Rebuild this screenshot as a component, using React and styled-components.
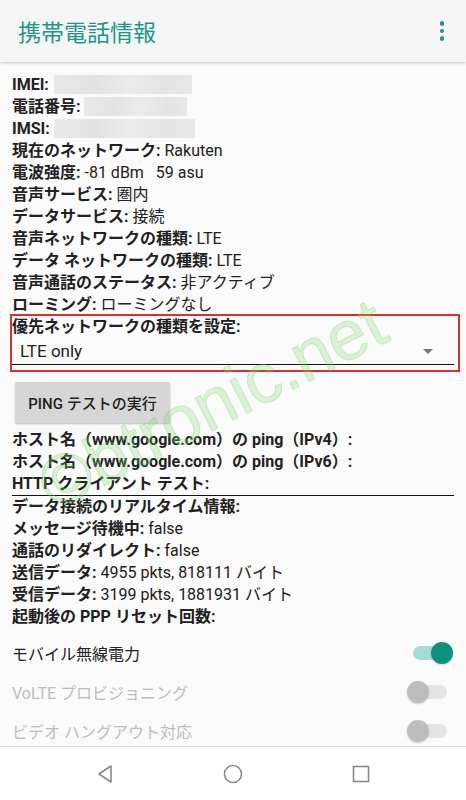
import React from "react";
import styled, { createGlobalStyle } from "styled-components";

const Global = createGlobalStyle`
  html, body { margin: 0; padding: 0; background: #fafafa; }
  * { box-sizing: border-box; }
`;

const FONT = `"Roboto", "Noto Sans CJK JP", "Noto Sans", sans-serif`;

const Screen = styled.div`
  position: relative;
  width: 466px;
  height: 800px;
  display: flex;
  flex-direction: column;
  background: #fafafa;
  font-family: ${FONT};
  color: #212121;
  overflow: hidden;
`;

const AppBar = styled.header`
  height: 62px;
  flex: none;
  display: flex;
  align-items: center;
  justify-content: space-between;
  padding: 0 18px 0 18px;
  background: #f5f5f5;
  box-shadow: 0 1px 3px rgba(0, 0, 0, 0.22);
  position: relative;
  z-index: 2;
`;

const Title = styled.h1`
  margin: 0;
  font-size: 23px;
  font-weight: 400;
  color: #1f9488;
  letter-spacing: 0;
`;

const Kebab = styled.div`
  display: flex;
  flex-direction: column;
  gap: 3px;
  margin-right: 4px;
  span {
    width: 4.5px;
    height: 4.5px;
    border-radius: 50%;
    background: #1f9488;
  }
`;

const Content = styled.main`
  flex: 1;
  overflow: hidden;
  padding: 12px 12px 0 12px;
`;

const Line = styled.div`
  font-size: 16px;
  line-height: 22px;
  height: 22px;
  white-space: nowrap;
  ${(p) => p.$underline && `border-bottom: 1.5px solid #111; height: 23px;`}
`;

const Label = styled.span`
  font-weight: 700;
`;

const Value = styled.span`
  font-weight: 400;
`;

const Redacted = styled.span`
  display: inline-block;
  vertical-align: middle;
  width: ${(p) => p.$w}px;
  height: 19px;
  margin-left: ${(p) => p.$ml || 1}px;
  margin-top: -3px;
  background: linear-gradient(100deg, #e9e9e9 0%, #e2e2e2 30%, #ebebeb 55%, #e3e3e3 80%, #e8e8e8 100%);
`;

const Highlight = styled.section`
  margin: -2px -6px -2px -2px;
  padding: 0 4px 0 0;
  border: 2px solid #d9322e;
`;

const SelectRow = styled.div`
  height: 27px;
  margin-bottom: 5px;
  display: flex;
  align-items: center;
  justify-content: space-between;
  padding: 0 21px 0 8px;
  border-bottom: 1.5px solid #111;
  font-size: 17px;
  color: #212121;
`;

const Caret = styled.span`
  width: 0;
  height: 0;
  border-left: 5px solid transparent;
  border-right: 5px solid transparent;
  border-top: 5px solid #757575;
`;

const PingButton = styled.button`
  display: block;
  margin: 12px 0 6px 3px;
  width: 155px;
  height: 41px;
  border: none;
  border-radius: 2px;
  background: #d6d6d6;
  box-shadow: 0 1px 2px rgba(0, 0, 0, 0.25);
  font-family: ${FONT};
  font-size: 15px;
  font-weight: 500;
  color: #222;
  padding: 0;
`;

const Toggles = styled.div`
  margin-top: 5px;
`;

const ToggleRow = styled.div`
  height: 39px;
  display: flex;
  align-items: center;
  justify-content: space-between;
  font-size: 16px;
  color: ${(p) => (p.$disabled ? "#bdbdbd" : "#212121")};
`;

const Switch = styled.span`
  position: relative;
  width: 46px;
  height: 22px;
  margin-right: 1px;
  flex: none;
`;

const Track = styled.span`
  position: absolute;
  left: 6px;
  top: 4px;
  width: 34px;
  height: 14px;
  border-radius: 7px;
  background: ${(p) => (p.$on ? "#a9dbd5" : "#e4e4e4")};
`;

const Thumb = styled.span`
  position: absolute;
  top: 0;
  ${(p) => (p.$on ? "right: 0;" : "left: 0;")}
  width: 22px;
  height: 22px;
  border-radius: 50%;
  background: ${(p) => (p.$on ? "#10907f" : "#bdbdbd")};
  box-shadow: 0 1px 2px rgba(0, 0, 0, 0.18);
`;

const NavBar = styled.nav`
  height: 54px;
  flex: none;
  background: #ffffff;
  border-top: 1px solid #dedede;
  display: grid;
  grid-template-columns: repeat(3, 128px);
  justify-content: center;
  align-items: center;
  justify-items: center;
  position: relative;
  z-index: 2;
`;

const Watermark = styled.div`
  position: absolute;
  left: 212px;
  top: 404px;
  transform: translate(-50%, -50%) rotate(-27deg);
  font-family: "Liberation Sans", "Roboto", sans-serif;
  font-size: 70px;
  color: rgba(125, 220, 105, 0.26);
  -webkit-text-stroke: 1px rgba(110, 205, 95, 0.3);
  white-space: nowrap;
  pointer-events: none;
  z-index: 1;
`;

function Toggle({ on, disabled, children }) {
  return (
    <ToggleRow $disabled={disabled}>
      <span>{children}</span>
      <Switch>
        <Track $on={on} />
        <Thumb $on={on} />
      </Switch>
    </ToggleRow>
  );
}

const info = [
  ["現在のネットワーク:", "Rakuten"],
  ["電波強度:", "-81 dBm\u00a0\u00a0\u00a059 asu"],
  ["音声サービス:", "圏内"],
  ["データサービス:", "接続"],
  ["音声ネットワークの種類:", "LTE"],
  ["データ ネットワークの種類:", "LTE"],
  ["音声通話のステータス:", "非アクティブ"],
  ["ローミング:", "ローミングなし"],
];

const stats = [
  ["メッセージ待機中:", "false"],
  ["通話のリダイレクト:", "false"],
  ["送信データ:", "4955 pkts, 818111 バイト"],
  ["受信データ:", "3199 pkts, 1881931 バイト"],
  ["起動後の PPP リセット回数:", ""],
];

export default function App() {
  return (
    <>
      <Global />
      <Screen>
        <AppBar>
          <Title>携帯電話情報</Title>
          <Kebab>
            <span />
            <span />
            <span />
          </Kebab>
        </AppBar>
        <Content>
          <Line>
            <Label>IMEI:</Label>
            <Redacted $w={138} $ml={5} />
          </Line>
          <Line>
            <Label>電話番号:</Label>
            <Redacted $w={103} $ml={3} />
          </Line>
          <Line>
            <Label>IMSI:</Label>
            <Redacted $w={141} $ml={4} />
          </Line>
          {info.map(([l, v]) => (
            <Line key={l}>
              <Label>{l}</Label> <Value>{v}</Value>
            </Line>
          ))}
          <Highlight>
            <Line>
              <Label>優先ネットワークの種類を設定:</Label>
            </Line>
            <SelectRow>
              <span>LTE only</span>
              <Caret />
            </SelectRow>
          </Highlight>
          <PingButton>PING テストの実行</PingButton>
          <Line>
            <Label>ホスト名（www.google.com）の ping（IPv4）:</Label>
          </Line>
          <Line>
            <Label>ホスト名（www.google.com）の ping（IPv6）:</Label>
          </Line>
          <Line $underline>
            <Label>HTTP クライアント テスト:</Label>
          </Line>
          <Line>
            <Label>データ接続のリアルタイム情報:</Label>
          </Line>
          {stats.map(([l, v]) => (
            <Line key={l}>
              <Label>{l}</Label> <Value>{v}</Value>
            </Line>
          ))}
          <Toggles>
            <Toggle on>モバイル無線電力</Toggle>
            <Toggle disabled>VoLTE プロビジョニング</Toggle>
            <Toggle disabled>ビデオ ハングアウト対応</Toggle>
          </Toggles>
        </Content>
        <NavBar>
          <svg width="20" height="22" viewBox="0 0 20 22">
            <path d="M16 3 L4 11 L16 19 Z" fill="none" stroke="#8a8a8a" strokeWidth="1.6" strokeLinejoin="round" />
          </svg>
          <svg width="22" height="22" viewBox="0 0 22 22">
            <circle cx="11" cy="11" r="8.5" fill="none" stroke="#8a8a8a" strokeWidth="1.6" />
          </svg>
          <svg width="20" height="20" viewBox="0 0 20 20">
            <rect x="2.5" y="2.5" width="15" height="15" fill="none" stroke="#8a8a8a" strokeWidth="1.6" />
          </svg>
        </NavBar>
        <Watermark>©btronic.net</Watermark>
      </Screen>
    </>
  );
}
